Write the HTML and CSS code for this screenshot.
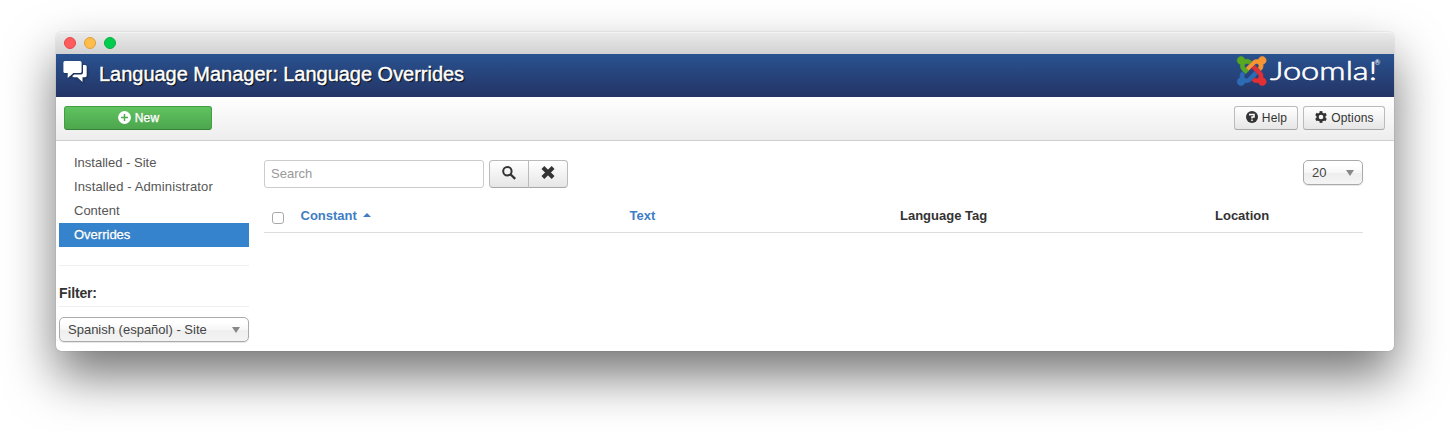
FILE: index.html
```html
<!DOCTYPE html>
<html lang="en">
<head>
<meta charset="utf-8">
<title>Language Manager: Language Overrides</title>
<link rel="stylesheet" href="styles.css">
</head>
<body>
<div class="window">
  <div class="titlebar"><span class="dot close"></span><span class="dot minimize"></span><span class="dot expand"></span></div>
  <header class="header">
    <svg class="title-icon" width="25" height="22" viewBox="0 0 25 22" fill="#fff"><path d="M2 0H17Q18.600 0 18.600 1.600V10.500Q18.600 12 17 12H10.500L4.700 17V12H2Q.4 12 .4 10.500V1.600Q.4 0 2 0Z"/><path d="M20 4H22.100Q23.700 4 23.700 5.600V14.600Q23.700 16.200 22.100 16.200H19.500V21L14.300 16.200H11Q9.800 16.200 9.300 15L11.300 13.400H18Q20 13.400 20 11.400Z"/></svg>
    <h1 class="page-title">Language Manager: Language Overrides</h1>
    <svg class="logo" width="146" height="34" viewBox="0 0 146 34">
      <g class="mark" transform="translate(1.200 2.500) scale(1.210)">
        <path fill="#2d6cb5" stroke="#2d6cb5" d="M16.719 14.759L14.22 17.26l-2.37 2.37-.462.466c-1.368 1.365-3.297 1.83-5.047 1.397-.327 1.424-1.604 2.49-3.13 2.49C1.438 23.983 0 22.547 0 20.772c0-1.518 1.055-2.789 2.469-3.123-.446-1.76.016-3.705 1.396-5.08l.179-.18 2.37 2.37-.184.181c-.769.779-.769 2.024 0 2.789.771.78 2.022.78 2.787 0l.465-.465 2.367-2.371 2.502-2.506z"/>
        <path fill="#e03035" stroke="#e03035" d="M17.643 21.411c-1.822.563-3.885.12-5.328-1.318l-.18-.185 2.365-2.369.18.184c.771.768 2.018.768 2.787 0 .765-.765.769-2.010-.004-2.781l-.466-.465-2.365-2.370-2.502-2.503 2.370-2.369 2.499 2.505 2.367 2.370.464.464c1.365 1.360 1.846 3.278 1.411 5.021 1.560.224 2.759 1.560 2.759 3.180 0 1.784-1.439 3.210-3.209 3.210-1.545 0-2.851-1.096-3.135-2.565z"/>
        <path fill="#f79533" stroke="#f79533" d="M6.975 9.461l2.508-2.505 2.370-2.369.462-.461c1.365-1.366 3.300-1.837 5.063-1.395.233-1.530 1.560-2.707 3.150-2.707 1.785.010 3.222 1.447 3.222 3.221 0 1.590-1.155 2.910-2.685 3.166.435 1.740-.045 3.690-1.410 5.055l-.180.180-2.370-2.370.180-.180c.770-.773.770-2.019 0-2.787-.765-.780-2.010-.780-2.790 0l-.465.465-2.370 2.370-2.505 2.505z" transform="translate(.2 0)"/>
        <path fill="#57a720" stroke="#57a720" transform="rotate(180 12 12)" d="M17.643 21.411c-1.822.563-3.885.12-5.328-1.318l-.18-.185 2.365-2.369.18.184c.771.768 2.018.768 2.787 0 .765-.765.769-2.010-.004-2.781l-.466-.465-2.365-2.370 2.370-2.370 2.364 2.370.464.464c1.365 1.360 1.846 3.278 1.411 5.021 1.560.224 2.759 1.560 2.759 3.180 0 1.784-1.439 3.210-3.209 3.210-1.545 0-2.851-1.096-3.135-2.565z"/>
      </g>
      <text class="wordmark" x="34" y="26" textLength="107" lengthAdjust="spacingAndGlyphs">Joomla!</text>
      <text class="registered" x="138.500" y="11">®</text>
    </svg>
  </header>
  <div class="toolbar">
    <button class="btn btn-new"><svg width="13" height="13" viewBox="0 0 13 13"><circle cx="6.500" cy="6.500" r="6.400" fill="#fff"/><path d="M6.500 3v7M3 6.500h7" stroke="#4eac4e" stroke-width="1.500"/></svg><span>New</span></button>
    <button class="btn btn-help"><svg width="12" height="12" viewBox="0 0 12 12"><circle cx="6" cy="6" r="6" fill="#333"/><path d="M3.800 4.600V3.600H8V6H6V7.500M6 8.500V10" fill="none" stroke="#fff" stroke-width="1.500"/></svg><span>Help</span></button>
    <button class="btn btn-options"><svg width="12" height="12" viewBox="0 0 13 13"><g fill="#333"><path d="M5 .1h3V12.900H5z"/><path d="M5 .1h3V12.900H5z" transform="rotate(60 6.500 6.500)"/><path d="M5 .1h3V12.900H5z" transform="rotate(120 6.500 6.500)"/><circle cx="6.500" cy="6.500" r="5"/></g><circle cx="6.500" cy="6.500" r="2.500" fill="#f3f3f3"/></svg><span>Options</span></button>
  </div>
  <div class="body">
    <aside class="sidebar">
      <nav class="menu">
        <a class="item">Installed - Site</a>
        <a class="item wide">Installed - Administrator</a>
        <a class="item">Content</a>
        <a class="item active">Overrides</a>
      </nav>
      <h2 class="filter-title">Filter:</h2>
      <div class="select"><span>Spanish (español) - Site</span><i class="caret-down"></i></div>
    </aside>
    <main class="main">
      <div class="search-row">
        <input class="search" placeholder="Search">
        <div class="group">
          <button class="btn"><svg width="14" height="14" viewBox="0 0 14 14" fill="none" stroke="#333"><circle cx="5.400" cy="5.200" r="4.200" stroke-width="2"/><path d="M8.400 8.200L13.200 12.900" stroke-width="2.300"/></svg></button>
          <button class="btn"><svg width="14" height="13" viewBox="0 0 14 13"><path d="M1.900 1.500L12.100 11.500M12.100 1.500L1.900 11.500" stroke="#333" stroke-width="4"/></svg></button>
        </div>
        <div class="select limit"><span>20</span><i class="caret-down"></i></div>
      </div>
      <div class="table-head">
        <input type="checkbox" class="check">
        <a class="sort">Constant<i class="caret-up"></i></a>
        <a class="sort">Text</a>
        <span>Language Tag</span>
        <span>Location</span>
      </div>
    </main>
  </div>
</div>
</body>
</html>
```
FILE: styles.css
```css
* { box-sizing: border-box; }
body {
  margin: 0;
  padding: 32px 56px 0;
  height: 431px;
  overflow: hidden;
  background: #fff;
  color: #333;
  font: 13px/18px "Liberation Sans", Arial, sans-serif;
}
.window {
  height: 319px;
  border-radius: 5px;
  background: #fff;
  box-shadow: 0 0 1px rgba(0,0,0,.45), 0 25px 50px rgba(0,0,0,.54);
}
.titlebar {
  display: flex;
  align-items: center;
  gap: 8px;
  height: 22px;
  padding-left: 8px;
  border-radius: 5px 5px 0 0;
  background: linear-gradient(#ebebeb, #d2d2d2);
  box-shadow: inset 0 1px 0 #f4f4f4;
}
.dot { width: 12px; height: 12px; border-radius: 50%; border: 1px solid; }
.close { background: #ff5b5c; border-color: #e14a4c; }
.minimize { background: #ffbd4a; border-color: #e0a03a; }
.expand { background: #00cd4e; border-color: #10ac43; }
.header {
  display: flex;
  align-items: flex-start;
  height: 43px;
  padding: 0 12px 0 7px;
  background: linear-gradient(#295290, #243465);
}
.title-icon { margin-top: 7px; filter: drop-shadow(1px 1px 1px rgba(0,0,0,.4)); }
.page-title {
  margin: 0 0 0 11px;
  color: #fff;
  font-size: 20px;
  line-height: 40px;
  font-weight: 400;
  letter-spacing: -.02px;
  white-space: nowrap;
  -webkit-text-stroke: .4px #fff;
  text-shadow: 1px 1px 1px #000;
}
.logo { margin-left: auto; }
.mark { stroke-width: .5px; }
.wordmark { fill: #fff; font: 300 25px Lato, sans-serif; stroke: #fff; stroke-width: .6px; }
.registered { fill: #fff; font: 7px Lato, sans-serif; }
.toolbar {
  display: flex;
  align-items: flex-start;
  height: 44px;
  padding: 9px 9px 0 8px;
  border-bottom: 1px solid #cfcfcf;
  background: linear-gradient(#fff, #ededed);
}
.btn {
  display: flex;
  align-items: center;
  justify-content: center;
  gap: 4px;
  height: 24px;
  padding: 0;
  border: 1px solid #bbb;
  border-bottom-color: #a8a8a8;
  border-radius: 3px;
  background: linear-gradient(#fff, #e6e6e6);
  color: #333;
  font: 12px/22px "Liberation Sans", Arial, sans-serif;
  letter-spacing: .15px;
}
.toolbar .btn { padding-left: 1px; }
.toolbar .btn svg { margin-bottom: 2px; }
.btn-new {
  width: 148px;
  border-color: #419e41 #419e41 #378137;
  background: linear-gradient(#5fc35f, #4da64d);
  color: #fff;
  -webkit-text-stroke: .35px #fff;
  text-shadow: 0 -1px 0 rgba(0,0,0,.25);
}
.btn-help { width: 64px; margin-left: auto; }
.btn-options { width: 82px; margin-left: 5px; }
.body { display: flex; }
.sidebar { width: 190px; margin: 10px 15px 0 3px; }
.menu { padding-bottom: 18px; border-bottom: 1px solid #eee; }
.item { display: block; height: 24px; padding-left: 15px; line-height: 24px; color: #555; }
.wide { letter-spacing: .12px; }
.active { background: #3483cc; color: #fff; -webkit-text-stroke: .3px #fff; text-shadow: 0 -1px 0 rgba(0,0,0,.2); }
.filter-title {
  height: 41px;
  margin: 0 0 10px;
  padding-top: 17px;
  border-bottom: 1px solid #eee;
  font-size: 14px;
  line-height: 20px;
  letter-spacing: -.15px;
}
.select {
  display: flex;
  align-items: center;
  justify-content: space-between;
  height: 25px;
  padding: 0 8px;
  border: 1px solid #aaa;
  border-radius: 5px;
  background: linear-gradient(#fff 20%, #f6f6f6 50%, #eee 52%, #f4f4f4);
  box-shadow: 0 1px 1px rgba(0,0,0,.1);
  color: #444;
}
.caret-down { border: 4px solid transparent; border-top: 6px solid #888; border-bottom: 0; }
.main { width: 1099px; padding-top: 19px; }
.search-row { display: flex; }
.search {
  width: 220px;
  height: 28px;
  margin-right: 5px;
  padding: 0 6px 2px;
  border: 1px solid #ccc;
  border-radius: 3px;
  font: 13px "Liberation Sans", Arial, sans-serif;
}
.search::placeholder { color: #999; }
.group { display: flex; }
.group .btn { width: 40px; height: 28px; padding: 0 0 3px; border-radius: 4px 0 0 4px; }
.group .btn + .btn { margin-left: -1px; border-radius: 0 4px 4px 0; }
.limit { width: 60px; margin-left: auto; }
.table-head {
  display: grid;
  grid-template-columns: 28.500px 329px 270.500px 315px 1fr;
  height: 45px;
  padding: 19px 0 0 8px;
  border-bottom: 1px solid #ddd;
  font-weight: 700;
}
.check {
  appearance: none;
  width: 12px;
  height: 12px;
  margin: 5px 0 0;
  border: 1px solid #aaa;
  border-radius: 3px;
  background: #fff;
}
.sort { color: #3f7dc4; }
.caret-up { display: inline-block; margin-left: 6px; vertical-align: 3px; border: 4px solid transparent; border-bottom-color: #3f7dc4; border-top: 0; }
```
